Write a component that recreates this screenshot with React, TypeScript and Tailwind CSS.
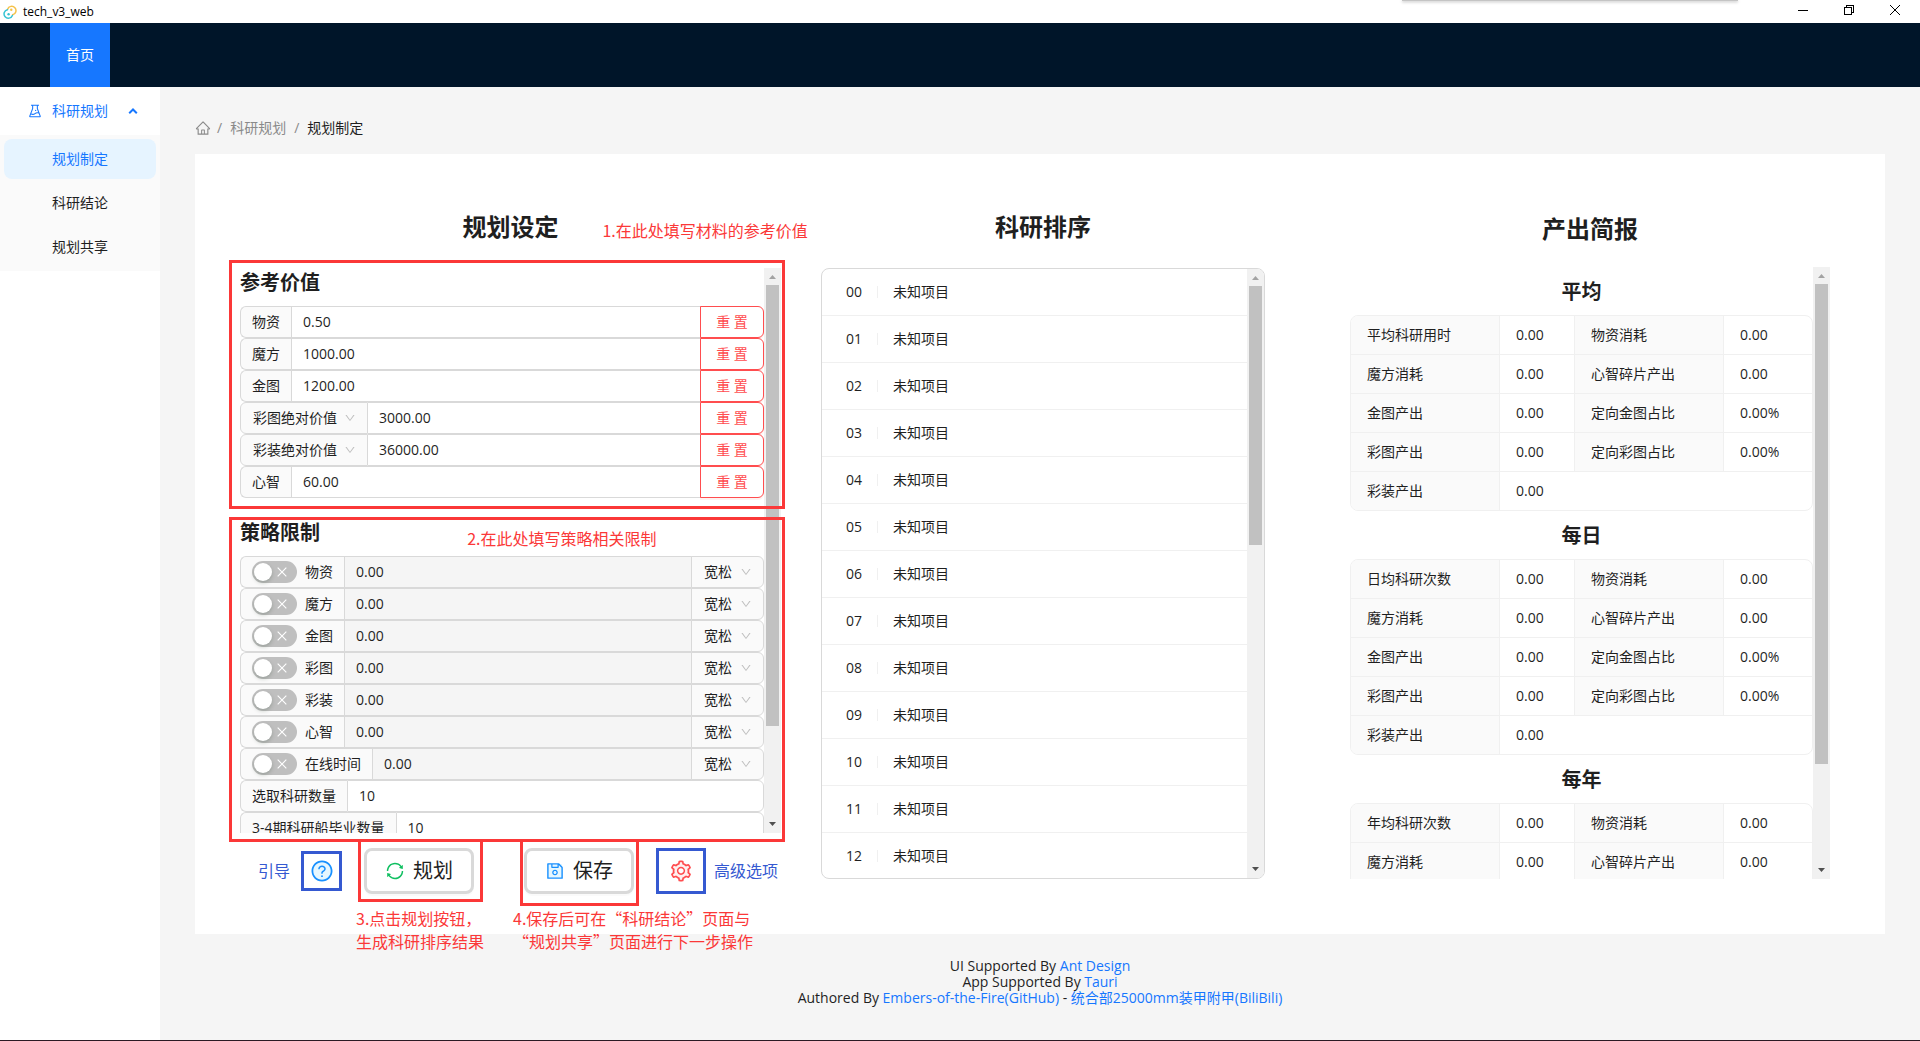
import { useId, type ReactNode } from "react";
import {
  AiOutlineClose,
  AiOutlineDown,
  AiOutlineExperiment,
  AiOutlineHome,
  AiOutlineQuestionCircle,
  AiOutlineSave,
  AiOutlineSetting,
  AiOutlineSync,
} from "react-icons/ai";

/* ---------- Window chrome ---------- */

function TauriLogo() {
  return (
    <svg viewBox="0 0 14 16" className="h-4 w-3.5" fill="none" aria-hidden="true">
      <path d="M4.6 5.2a4.3 4.3 0 1 1 5 5.6" stroke="#f5c24a" strokeWidth="1.5" strokeLinecap="round" />
      <path d="M9.4 11.4a4.3 4.3 0 1 1-5-5.7" stroke="#35c3d3" strokeWidth="1.5" strokeLinecap="round" />
      <circle cx="8.3" cy="5.8" r="1.2" fill="#f5c24a" />
      <circle cx="5.6" cy="10.2" r="1.2" fill="#35c3d3" />
    </svg>
  );
}

function TitleBar() {
  return (
    <div className="relative flex h-[23px] items-center bg-white pr-0.5 pl-[3px] text-black">
      <TauriLogo />
      <span className="ml-1.5 flex-1 text-xs leading-4">tech_v3_web</span>
      <div className="absolute top-0 right-[9.5%] h-px w-[17.5%] bg-[#c4c4c4] shadow-[0_1px_3px_rgba(0,0,0,0.4)]" />
      <div className="flex self-start">
        <button type="button" aria-label="最小化" className="flex h-5 w-[46px] items-center justify-center">
          <svg viewBox="0 0 10 10" className="size-2.5" shapeRendering="crispEdges">
            <path d="M0 5.5h10" stroke="#000" />
          </svg>
        </button>
        <button type="button" aria-label="还原" className="flex h-5 w-[46px] items-center justify-center">
          <svg viewBox="0 0 10 10" className="size-2.5" fill="none" stroke="#000" shapeRendering="crispEdges">
            <path d="M.5 2.5h7v7h-7zM2.5 2.5v-2h7v7h-2" />
          </svg>
        </button>
        <button type="button" aria-label="关闭" className="flex h-5 w-[46px] items-center justify-center">
          <svg viewBox="0 0 10 10" className="size-2.5" stroke="#000">
            <path d="M0 0l10 10M10 0L0 10" />
          </svg>
        </button>
      </div>
    </div>
  );
}

/* ---------- Sidebar ---------- */

const menuItems = ["规划制定", "科研结论", "规划共享"];

function Sidebar() {
  return (
    <nav className="w-40 shrink-0 bg-white pt-1">
      <button type="button" className="mb-1 flex h-10 w-full items-center pl-[27px] text-[#1677ff]">
        <AiOutlineExperiment className="size-4" />
        <span className="ml-[9px]">科研规划</span>
        <svg viewBox="0 0 10 6" className="ml-5 h-1.5 w-2.5" fill="none" stroke="currentColor" strokeWidth="2">
          <path d="M1.2 5.200L5 1.500l3.800 3.700" />
        </svg>
      </button>
      <ul className="flex flex-col gap-1 bg-[#fafafa] p-1">
        {menuItems.map((item, i) => (
          <li key={item}>
            <a
              href="#"
              className={
                i === 0
                  ? "flex h-10 items-center rounded-lg bg-[#e6f4ff] pl-12 text-[#1677ff]"
                  : "flex h-10 items-center rounded-lg pl-12"
              }
            >
              {item}
            </a>
          </li>
        ))}
      </ul>
    </nav>
  );
}

/* ---------- Shared pieces ---------- */

function ScrollPane({ thumb, children }: { thumb: string; children: ReactNode }) {
  return (
    <div className="flex h-full">
      <div className="min-w-0 flex-1 overflow-y-auto [scrollbar-width:none]">{children}</div>
      <div className="flex w-[17px] shrink-0 flex-col items-center bg-[#f1f1f1]" aria-hidden="true">
        <svg viewBox="0 0 17 17" className="size-[17px] shrink-0">
          <path d="M5 11h7L8.500 7z" fill="#a3a3a3" />
        </svg>
        <div className="min-h-0 w-full flex-1 px-0.5">
          <div className="bg-[#c1c1c1]" style={{ height: thumb }} />
        </div>
        <svg viewBox="0 0 17 17" className="size-[17px] shrink-0">
          <path d="M5 6h7l-3.500 4z" fill="#505050" />
        </svg>
      </div>
    </div>
  );
}

function InlineSelect({ label, value, className }: { label: string; value: string; className: string }) {
  return (
    <div className={"relative shrink-0 border border-[#d9d9d9] bg-[#fafafa] " + className}>
      <select aria-label={label} className="h-full w-full appearance-none bg-transparent pl-3 outline-none" defaultValue={value}>
        <option>{value}</option>
      </select>
      <AiOutlineDown className="pointer-events-none absolute top-[9px] right-[11px] size-3 text-[#bfbfbf]" />
    </div>
  );
}

/* ---------- Left column ---------- */

type PriceRow = { name: string; value: string; select?: boolean };

const priceRows: PriceRow[] = [
  { name: "物资", value: "0.50" },
  { name: "魔方", value: "1000.00" },
  { name: "金图", value: "1200.00" },
  { name: "彩图绝对价值", value: "3000.00", select: true },
  { name: "彩装绝对价值", value: "36000.00", select: true },
  { name: "心智", value: "60.00" },
];

function PriceField({ name, value, select }: PriceRow) {
  const id = useId();
  return (
    <div className="flex h-8">
      {select ? (
        <InlineSelect label={name} value={name} className="w-32 rounded-l-md" />
      ) : (
        <label
          htmlFor={id}
          className="flex shrink-0 items-center rounded-l-md border border-r-0 border-[#d9d9d9] bg-[#fafafa] px-[11px]"
        >
          {name}
        </label>
      )}
      <input
        id={id}
        aria-label={name}
        defaultValue={value}
        className={
          select
            ? "min-w-0 flex-1 border border-l-0 border-[#d9d9d9] px-[11px] outline-none"
            : "min-w-0 flex-1 border border-[#d9d9d9] px-[11px] outline-none"
        }
      />
      <button
        type="button"
        className="-ml-px w-16 shrink-0 rounded-r-md border border-[#ff4d4f] bg-white text-[#ff4d4f] shadow-[0_2px_0_rgba(255,38,5,0.06)]"
      >
        重 置
      </button>
    </div>
  );
}

const limitNames = ["物资", "魔方", "金图", "彩图", "彩装", "心智", "在线时间"];

function LimitField({ name }: { name: string }) {
  const id = useId();
  return (
    <div className="flex h-8">
      <label
        htmlFor={id}
        className="flex shrink-0 items-center gap-2 rounded-l-md border border-r-0 border-[#d9d9d9] bg-[#fafafa] px-[11px]"
      >
        <span className="flex h-[22px] w-[45px] items-center justify-between rounded-full bg-[#bfbfbf] pr-2 pl-0.5">
          <input
            id={id}
            type="checkbox"
            role="switch"
            className="size-[18px] appearance-none rounded-full bg-white shadow-[0_2px_4px_rgba(0,35,11,0.2)]"
          />
          <AiOutlineClose className="size-3.5 text-white" />
        </span>
        {name}
      </label>
      <input
        aria-label={name + "数值"}
        defaultValue="0.00"
        disabled
        className="min-w-0 flex-1 border border-[#d9d9d9] bg-[#f5f5f5] px-[11px]"
      />
      <InlineSelect label={name + "策略"} value="宽松" className="-ml-px w-[73px] rounded-r-md" />
    </div>
  );
}

function CountField({ name, value }: { name: string; value: string }) {
  const id = useId();
  return (
    <div className="flex h-8">
      <label
        htmlFor={id}
        className="flex shrink-0 items-center rounded-l-md border border-r-0 border-[#d9d9d9] bg-[#fafafa] px-[11px]"
      >
        {name}
      </label>
      <input
        id={id}
        defaultValue={value}
        className="min-w-0 flex-1 rounded-r-md border border-[#d9d9d9] px-[11px] outline-none"
      />
    </div>
  );
}

const noteText =
  "pointer-events-none absolute font-['Noto_Sans_CJK_SC',sans-serif] text-base leading-[23px] whitespace-pre text-[#fb3838]";
const noteBox = "pointer-events-none absolute border-3 border-[#fb3838]";

function SettingsColumn() {
  return (
    <section className="min-w-0 flex-[541]">
      <h2 className="relative mb-[25px] text-center text-2xl leading-8 font-semibold">
        规划设定
        <span className={noteText + " top-2 left-[67%] font-normal"}>1.在此处填写材料的参考价值</span>
      </h2>
      <div className="relative h-[565px]">
        <ScrollPane thumb="83%">
          <h3 className="mb-2 text-xl leading-[30px] font-semibold">参考价值</h3>
          {priceRows.map((row) => (
            <PriceField key={row.name} {...row} />
          ))}
          <h3 className="mt-5 mb-2 text-xl leading-[30px] font-semibold">策略限制</h3>
          {limitNames.map((name) => (
            <LimitField key={name} name={name} />
          ))}
          <CountField name="选取科研数量" value="10" />
          <CountField name="3-4期科研船毕业数量" value="10" />
        </ScrollPane>
        <div className={noteBox + " -top-2 -right-1 -left-[11px] h-[249px]"} />
        <div className={noteBox + " top-[249px] -right-1 -left-[11px] h-[325px]"} />
        <span className={noteText + " top-[259px] left-[42%]"}>2.在此处填写策略相关限制</span>
      </div>
      <div className="mt-[15px] flex h-[46px] items-center pl-[18px]">
        <span className="text-base text-[#3559d1]">引导</span>
        <button
          type="button"
          aria-label="引导"
          className="ml-[11px] flex h-10 w-[41px] items-center justify-center border-3 border-[#3559d1]"
        >
          <AiOutlineQuestionCircle className="size-6 bg-[radial-gradient(#e6f7ff_60%,transparent_61%)] text-[#1890ff]" />
        </button>
        <div className="relative ml-[22px]">
          <button
            type="button"
            className="flex h-[46px] w-[110px] items-center justify-center gap-2 rounded-lg border-3 border-[#d9d9d9] bg-white text-xl shadow-[0_2px_0_rgba(0,0,0,0.02)]"
          >
            <AiOutlineSync className="size-5 text-[#0fbf60]" />
            规划
          </button>
          <div className={noteBox + " -top-[9px] -right-[9px] -bottom-2 -left-1.5"} />
          <p className={noteText + " top-[59px] -left-2"}>{"3.点击规划按钮，\n生成科研排序结果"}</p>
        </div>
        <div className="relative ml-[50px]">
          <button
            type="button"
            className="flex h-[46px] w-[110px] items-center justify-center gap-2 rounded-lg border-3 border-[#d9d9d9] bg-white text-xl shadow-[0_2px_0_rgba(0,0,0,0.02)]"
          >
            <AiOutlineSave className="size-5 bg-[linear-gradient(#e6f7ff,#e6f7ff)] bg-[length:70%_70%] bg-center bg-no-repeat text-[#1890ff]" />
            保存
          </button>
          <div className={noteBox + " -top-[9px] -right-[5px] -bottom-3 -left-1"} />
          <p className={noteText + " top-[59px] -left-[11px]"}>
            {"4.保存后可在“科研结论”页面与\n“规划共享”页面进行下一步操作"}
          </p>
        </div>
        <button
          type="button"
          aria-label="高级选项"
          className="ml-[22px] flex h-[46px] w-[50px] items-center justify-center border-3 border-[#3559d1]"
        >
          <AiOutlineSetting className="size-6 bg-[radial-gradient(#ffffff_20%,#fff1f0_21%,#fff1f0_50%,transparent_51%)] text-[#ff4d4f]" />
        </button>
        <span className="ml-2 text-base text-[#3559d1]">高级选项</span>
      </div>
    </section>
  );
}

/* ---------- Middle column ---------- */

const queue = Array.from({ length: 13 }, (_, i) => String(i).padStart(2, "0"));

function QueueColumn() {
  return (
    <section className="ml-10 min-w-0 flex-[444]">
      <h2 className="mb-[25px] text-center text-2xl leading-8 font-semibold">科研排序</h2>
      <div className="h-[611px] overflow-hidden rounded-lg border border-[#d9d9d9]">
        <ScrollPane thumb="45%">
          <ol>
            {queue.map((n) => (
              <li key={n} className="flex h-[47px] items-center border-b border-[#f0f0f0] pl-6">
                <span className="w-[31px]">{n}</span>
                <span className="h-3 w-px bg-[#f0f0f0]" />
                <span className="ml-[15px]">未知项目</span>
              </li>
            ))}
          </ol>
        </ScrollPane>
      </div>
    </section>
  );
}

/* ---------- Right column ---------- */

const headCell = "border-r border-b border-[#f0f0f0] bg-[#fafafa] px-4 text-left font-normal group-last:border-b-0";
const dataCell = "border-r border-b border-[#f0f0f0] pl-4 last:border-r-0 group-last:border-b-0";

function ReportTable({ title, first }: { title: string; first: string }) {
  const rows = [
    [first, "0.00", "物资消耗", "0.00"],
    ["魔方消耗", "0.00", "心智碎片产出", "0.00"],
    ["金图产出", "0.00", "定向金图占比", "0.00%"],
    ["彩图产出", "0.00", "定向彩图占比", "0.00%"],
    ["彩装产出", "0.00"],
  ];
  return (
    <>
      <h3 className="pt-2.5 pb-2 text-center text-xl leading-[30px] font-semibold">{title}</h3>
      <div className="overflow-hidden rounded-lg border border-[#f0f0f0]">
        <table className="w-full table-fixed border-separate border-spacing-0" aria-label={title}>
          <colgroup>
            <col className="w-[149px]" />
            <col className="w-[75px]" />
            <col className="w-[149px]" />
            <col />
          </colgroup>
          <tbody>
            {rows.map((r) => (
              <tr key={r[0]} className="group h-[39px] last:h-[38px]">
                <th scope="row" className={headCell}>
                  {r[0]}
                </th>
                {r.length > 2 ? (
                  <>
                    <td className={dataCell}>{r[1]}</td>
                    <th scope="row" className={headCell}>
                      {r[2]}
                    </th>
                    <td className={dataCell}>{r[3]}</td>
                  </>
                ) : (
                  <td colSpan={3} className={dataCell}>
                    {r[1]}
                  </td>
                )}
              </tr>
            ))}
          </tbody>
        </table>
      </div>
    </>
  );
}

function ReportColumn() {
  return (
    <section className="ml-[85px] min-w-0 flex-[480]">
      <h2 className="mb-5 text-center text-2xl leading-9 font-semibold">产出简报</h2>
      <div className="h-[612px]">
        <ScrollPane thumb="83%">
          <ReportTable title="平均" first="平均科研用时" />
          <ReportTable title="每日" first="日均科研次数" />
          <ReportTable title="每年" first="年均科研次数" />
        </ScrollPane>
      </div>
    </section>
  );
}

/* ---------- Page ---------- */

export default function App() {
  return (
    <div
      lang="zh-CN"
      className="flex min-h-screen flex-col border-b border-[#2b1a24] bg-[#f5f5f5] font-['Open_Sans','Noto_Sans_CJK_SC',sans-serif] text-sm leading-[22px] text-[#1f1f1f]"
    >
      <TitleBar />
      <header className="flex h-16 bg-[#001529] pl-[50px]">
        <a href="#" className="flex w-[60px] items-center justify-center bg-[#1677ff] text-white">
          首页
        </a>
      </header>
      <div className="flex flex-1">
        <Sidebar />
        <div className="flex min-w-0 flex-1 flex-col">
          <main className="px-[35px] pt-[30px]">
            <nav aria-label="面包屑" className="mb-[15px] flex items-center text-[#8a8a8a]">
              <a href="#" aria-label="首页">
                <AiOutlineHome className="size-4" />
              </a>
              <span className="mr-2 ml-1.5">/</span>
              <a href="#">科研规划</a>
              <span className="mx-2">/</span>
              <span className="text-[#1f1f1f]">规划制定</span>
            </nav>
            <div className="flex bg-white pt-[57px] pr-[55px] pb-10 pl-[45px]">
              <SettingsColumn />
              <QueueColumn />
              <ReportColumn />
            </div>
          </main>
          <footer className="py-6 text-center leading-4">
            <p>
              UI Supported By <a href="#" className="text-[#1677ff]">Ant Design</a>
            </p>
            <p>
              App Supported By <a href="#" className="text-[#1677ff]">Tauri</a>
            </p>
            <p>
              Authored By <a href="#" className="text-[#1677ff]">Embers-of-the-Fire(GitHub)</a> -{" "}
              <a href="#" className="text-[#1677ff]">统合部25000mm装甲附甲(BiliBili)</a>
            </p>
          </footer>
        </div>
      </div>
    </div>
  );
}
